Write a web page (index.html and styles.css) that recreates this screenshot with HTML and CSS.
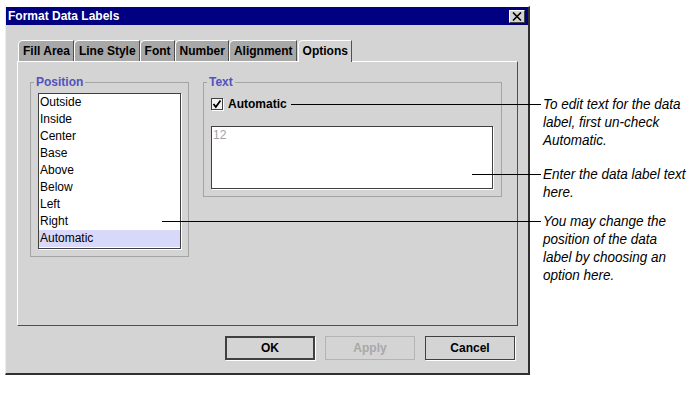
FILE: index.html
```html
<!DOCTYPE html>
<html lang="en">
<head>
    <meta charset="UTF-8">
    <title>Format Data Labels</title>
    <link rel="stylesheet" href="styles.css">
</head>
<body>
    <div class="screen">
        <div class="dialog">
            <div class="titlebar">
                <span>Format Data Labels</span>
                <span class="close">
                    <svg width="10" height="9" viewBox="0 0 10 9"><path d="M1 0.5 L9 8.5 M9 0.5 L1 8.5" stroke="#000" stroke-width="1.6" fill="none"/></svg>
                </span>
            </div>
            <div class="body">
                <div class="tabs">
                    <div class="tab">Fill Area</div>
                    <div class="tab">Line Style</div>
                    <div class="tab">Font</div>
                    <div class="tab">Number</div>
                    <div class="tab">Alignment</div>
                    <div class="tab active">Options</div>
                </div>
                <div class="panel">
                    <fieldset class="group position">
                        <legend>Position</legend>
                        <ul class="list">
                            <li>Outside</li>
                            <li>Inside</li>
                            <li>Center</li>
                            <li>Base</li>
                            <li>Above</li>
                            <li>Below</li>
                            <li>Left</li>
                            <li>Right</li>
                            <li class="selected">Automatic</li>
                        </ul>
                    </fieldset>
                    <fieldset class="group text">
                        <legend>Text</legend>
                        <div class="check-row">
                            <span class="checkbox">
                                <svg width="10" height="10" viewBox="0 0 10 10"><path d="M1.5 5 L3.8 8 L8.5 1.5" stroke="#000" stroke-width="1.8" fill="none"/></svg>
                            </span>
                            <span>Automatic</span>
                        </div>
                        <div class="textbox">12</div>
                    </fieldset>
                </div>
                <div class="buttons">
                    <button class="btn default">OK</button>
                    <button class="btn" disabled>Apply</button>
                    <button class="btn">Cancel</button>
                </div>
            </div>
        </div>

        <!-- callouts -->
        <div class="leader leader-auto"></div>
        <div class="leader leader-text"></div>
        <div class="leader leader-pos"></div>

        <p class="note note-auto">To edit text for the data<br>label, first un-check<br>Automatic.</p>
        <p class="note note-text">Enter the data label text<br>here.</p>
        <p class="note note-pos">You may change the<br>position of the data<br>label by choosing an<br>option here.</p>
    </div>
</body>
</html>
```

FILE: styles.css
```css
body {
    margin: 0;
    background: #fff;
    font-family: "Liberation Sans", Arial, sans-serif;
    font-size: 12px;
    color: #000;
}
.screen {
    position: relative;
    width: 692px;
    height: 396px;
    padding: 6px 0 0 5px;
    box-sizing: border-box;
    overflow: hidden;
}
.dialog {
    width: 525px;
    height: 369px;
    box-sizing: border-box;
    background: #d4d4d4;
    border-top: 1px solid #fff;
    border-left: 1px solid #ececec;
    border-right: 2px solid #303030;
    border-bottom: 2px solid #303030;
    display: flex;
    flex-direction: column;
}
.titlebar {
    height: 18px;
    background: #000080;
    color: #fff;
    font-weight: bold;
    font-size: 12px;
    display: flex;
    align-items: center;
    justify-content: space-between;
    padding: 0 3px 0 2px;
}
.close {
    width: 16px;
    height: 13px;
    box-sizing: border-box;
    background: #d4d4d4;
    border: 1px solid;
    border-color: #fff #404040 #404040 #fff;
    display: flex;
    align-items: center;
    justify-content: center;
}
.body {
    flex: 1;
    padding: 15px 10px 12px 11px;
    display: flex;
    flex-direction: column;
}
.tabs {
    display: flex;
    height: 21px;
    padding-left: 1px;
}
.tab {
    box-sizing: border-box;
    height: 21px;
    padding: 3px 3px 0 4px;
    background: #a8a8a8;
    border-top: 1px solid #fff;
    border-left: 1px solid #fff;
    border-right: 1px solid #505050;
    border-top-left-radius: 5px;
    font-weight: bold;
}
.tab.active {
    background: #d4d4d4;
    height: 22px;
    margin-bottom: -1px;
    margin-left: 1px;
    position: relative;
    z-index: 1;
}
.panel {
    height: 265px;
    box-sizing: border-box;
    border: 1px solid;
    border-color: #fff #505050 #505050 #fff;
    display: flex;
    align-items: flex-start;
    gap: 14px;
    padding: 13px 0 0 12px;
}
.group {
    margin: 0;
    padding: 4px 7px 7px;
    border: 1px solid #a4a4a4;
    min-width: 0;
    box-sizing: border-box;
}
.group legend {
    padding: 0 2px;
    margin-left: -4px;
    font-weight: bold;
    line-height: 14px;
    color: #5252bc;
}
.position {
    width: 159px;
}
.text {
    width: 299px;
}
.list {
    width: 143px;
    height: 156px;
    box-sizing: border-box;
    margin: 0;
    padding: 0;
    list-style: none;
    background: #fff;
    border: 1px solid #404040;
    box-shadow: 1px 1px 0 #fff;
}
.list li {
    height: 17px;
    line-height: 17px;
    padding-left: 1px;
}
.list li.selected {
    background: #d8d8fa;
}
.check-row {
    display: flex;
    align-items: center;
    gap: 5px;
    height: 12px;
    margin: 5px 0 16px;
    font-weight: bold;
}
.checkbox {
    width: 12px;
    height: 12px;
    box-sizing: border-box;
    background: #f4f4f4;
    border: 1px solid #404040;
    box-shadow: 1px 1px 0 #fff;
    display: flex;
    align-items: center;
    justify-content: center;
}
.textbox {
    width: 282px;
    height: 63px;
    box-sizing: border-box;
    padding: 1px 1px 0;
    line-height: 14px;
    background: #fff;
    color: #a4a4a4;
    border: 1px solid #404040;
    box-shadow: 1px 1px 0 #fff;
}
.buttons {
    display: flex;
    justify-content: flex-end;
    gap: 10px;
    margin-top: 10px;
    padding-right: 3px;
}
.btn {
    width: 90px;
    height: 24px;
    box-sizing: border-box;
    padding: 0;
    background: #d4d4d4;
    border: 1px solid #404040;
    box-shadow: 1px 1px 0 #fff;
    font-family: inherit;
    font-size: 12px;
    font-weight: bold;
    color: #000;
}
.btn.default {
    border-width: 2px;
}
.btn:disabled {
    border-color: #b4b4b4;
    box-shadow: none;
    color: #a8a8a8;
}
.leader {
    position: absolute;
    height: 1px;
    background: #000;
}
.leader-auto {
    left: 291px;
    top: 104px;
    width: 250px;
}
.leader-text {
    left: 472px;
    top: 174px;
    width: 69px;
}
.leader-pos {
    left: 162px;
    top: 221px;
    width: 379px;
}
.note {
    position: absolute;
    left: 543px;
    margin: 0;
    font-style: italic;
    font-size: 15px;
    line-height: 18px;
    white-space: nowrap;
    transform: scaleX(0.9);
    transform-origin: left top;
}
.note-auto {
    top: 95px;
}
.note-text {
    top: 165px;
}
.note-pos {
    top: 212px;
}
```
